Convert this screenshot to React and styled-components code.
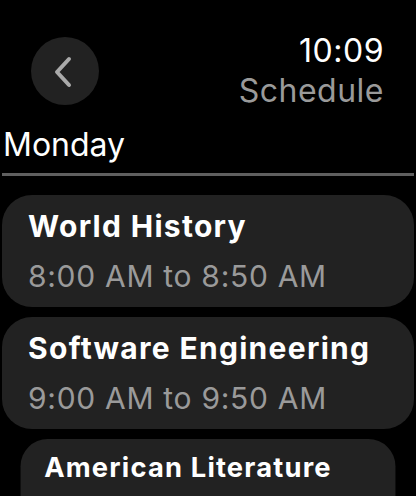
import React from 'react';
import styled, { createGlobalStyle } from 'styled-components';

const GlobalStyle = createGlobalStyle`
  html, body {
    margin: 0;
    padding: 0;
    background: #000;
  }
  body {
    font-family: Inter, "Noto Sans", sans-serif;
    color: #fff;
    overflow: hidden;
  }
`;

const Screen = styled.div`
  width: 416px;
  height: 496px;
  overflow: hidden;
  background: #000;
  padding: 0 2px;
  box-sizing: border-box;
`;

const Header = styled.header`
  display: flex;
  justify-content: space-between;
  align-items: flex-start;
  padding-top: 31px;
`;

const BackButton = styled.button`
  width: 68px;
  height: 68px;
  margin: 6px 0 0 29px;
  border: none;
  border-radius: 50%;
  background: #222;
  display: flex;
  align-items: center;
  justify-content: center;
  padding: 0;
  cursor: pointer;
`;

const TitleBlock = styled.div`
  text-align: right;
  padding-right: 30px;
  font-size: 32px;
  line-height: 40px;
  letter-spacing: 0.5px;
`;

const Clock = styled.div`
  color: #fff;
`;

const PageTitle = styled.div`
  color: #9a9a9a;
`;

const DayLabel = styled.h2`
  margin: 14px 0 0 1px;
  font-size: 32px;
  line-height: 40px;
  font-weight: 400;
  color: #fff;
`;

const Divider = styled.hr`
  margin: 8px 0 19px;
  border: none;
  height: 3px;
  background: #5f5f5f;
`;

const List = styled.div`
  display: flex;
  flex-direction: column;
  gap: 10px;
`;

const Card = styled.div`
  background: #222;
  border-radius: 30px;
  padding: 6px 26px;
  transform: scale(${({ $scale }) => $scale || 1});
  transform-origin: top center;
`;

const ClassName = styled.div`
  font-size: 30px;
  line-height: 50px;
  font-weight: 700;
  letter-spacing: 1.3px;
  color: #fff;
  white-space: nowrap;
`;

const ClassTime = styled.div`
  font-size: 30px;
  line-height: 50px;
  letter-spacing: 0.7px;
  color: #9a9a9a;
  white-space: nowrap;
`;

const classes = [
  { id: 1, name: 'World History', time: '8:00 AM to 8:50 AM' },
  { id: 2, name: 'Software Engineering', time: '9:00 AM to 9:50 AM' },
  { id: 3, name: 'American Literature', time: '10:00 AM to 10:50 AM', scale: 0.91 },
];

const App = () => (
  <Screen>
    <GlobalStyle />
    <Header>
      <BackButton aria-label="Back">
        <svg width="30" height="40" viewBox="0 0 30 40">
          <path
            d="M19 8 L7 21 L19 34"
            fill="none"
            stroke="#aaa"
            strokeWidth="4"
            strokeLinecap="round"
            strokeLinejoin="round"
          />
        </svg>
      </BackButton>
      <TitleBlock>
        <Clock>10:09</Clock>
        <PageTitle>Schedule</PageTitle>
      </TitleBlock>
    </Header>
    <DayLabel>Monday</DayLabel>
    <Divider />
    <List>
      {classes.map((c) => (
        <Card key={c.id} $scale={c.scale}>
          <ClassName>{c.name}</ClassName>
          <ClassTime>{c.time}</ClassTime>
        </Card>
      ))}
    </List>
  </Screen>
);

export default App;
